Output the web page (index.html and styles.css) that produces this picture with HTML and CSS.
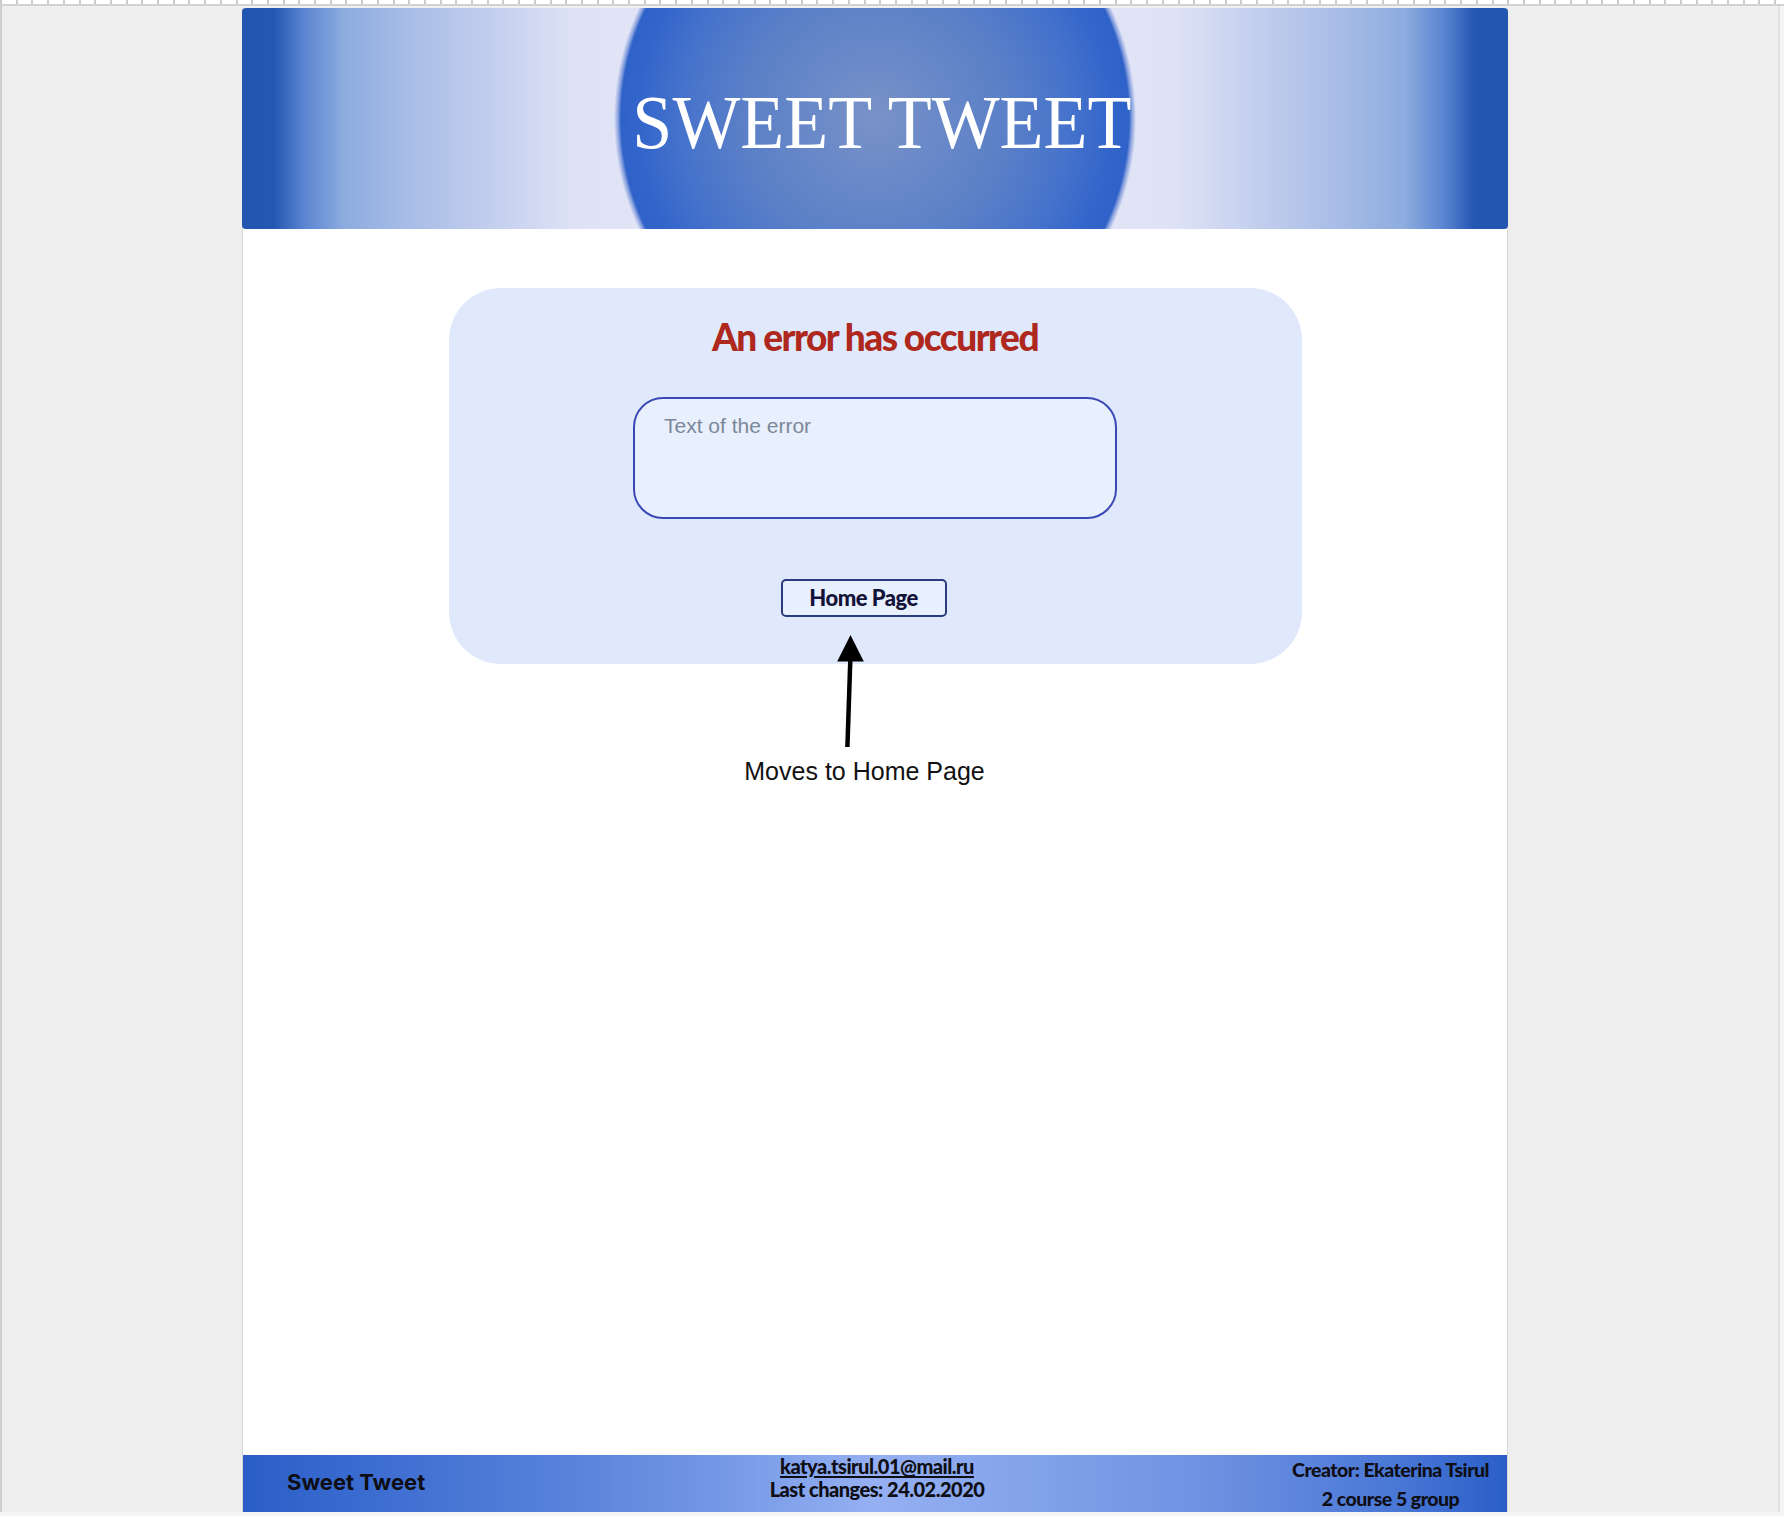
FILE: index.html
```html
<!DOCTYPE html>
<html lang="en">
<head>
<meta charset="utf-8">
<title>Sweet Tweet — Error</title>
<link rel="stylesheet" href="styles.css">
</head>
<body>
<div class="ruler"></div>
<div class="frame">
  <div class="page">
    <header class="masthead">
      <h1 class="brand">SWEET TWEET</h1>
    </header>
    <main class="content">
      <section class="error-card">
        <h2 class="error-title">An error has occurred</h2>
        <div class="error-text">Text of the error</div>
        <div class="actions"><button class="home-btn" type="button">Home Page</button></div>
      </section>
      <div class="annotation">
        <svg class="arrow" width="60" height="112" viewBox="0 0 60 112">
          <polygon points="15.5,0 2.2,26.5 28.8,26.5" fill="#000"/>
          <line x1="15.3" y1="25" x2="12.4" y2="112" stroke="#000" stroke-width="4.5"/>
        </svg>
        <p class="annotation-label">Moves to Home Page</p>
      </div>
    </main>
    <footer class="site-footer">
      <div class="footer-brand">Sweet Tweet</div>
      <div class="footer-contact"><a class="footer-mail" href="#">katya.tsirul.01@mail.ru</a><br>Last changes: 24.02.2020</div>
      <div class="footer-credits">Creator: Ekaterina Tsirul<br>2 course 5 group</div>
    </footer>
  </div>
</div>
</body>
</html>
```
FILE: styles.css
```css
html, body {
  margin: 0;
  padding: 0;
}

body {
  width: 1784px;
  height: 1516px;
  overflow: hidden;
  background: #f5f5f5;
  font-family: "Liberation Sans", Arial, sans-serif;
}

.ruler {
  height: 4px;
  border-bottom: 2px solid #d2d2d2;
  background: repeating-linear-gradient(90deg, #cbcbcb 0 2px, #ffffff 2px 15.7px);
}

.frame {
  width: 1776px;
  height: 1506px;
  border-left: 2px solid #cfcfcf;
  border-right: 2px solid #e2e2e2;
  background: #eeeeee;
  display: flex;
}

.page {
  margin: 2px 0 0 240px;
  width: 1264px;
  height: 1504px;
  background: #ffffff;
  border-left: 1px solid #d6d6d6;
  border-right: 1px solid #d6d6d6;
  display: flex;
  flex-direction: column;
}

/* ---------- header ---------- */
.masthead {
  height: 221px;
  margin: 0 -1px 0 -1px;
  border-radius: 4px;
  box-sizing: border-box;
  padding: 7px 0 0 14px;
  display: flex;
  align-items: center;
  justify-content: center;
  background:
    radial-gradient(circle at 50% 50%,
      #7a93c8 0px,
      #6a89c8 60px,
      #5b80c7 130px,
      #4572cb 195px,
      #3366cb 235px,
      #2f62c8 254px,
      rgba(110, 140, 215, 0.75) 257px,
      rgba(225, 230, 248, 0) 261px),
    linear-gradient(90deg,
      #2356b0 0px,
      #2457b2 32px,
      #5a85d1 62px,
      #8dacdf 102px,
      #a7bce6 165px,
      #c2cdee 245px,
      #dde2f5 330px,
      #ecedf9 632px,
      #dde2f5 934px,
      #c2cdee 1019px,
      #a7bce6 1099px,
      #8dacdf 1162px,
      #5a85d1 1202px,
      #2457b2 1232px,
      #2356b0 1265px);
}

.brand {
  margin: 0;
  font-family: "Liberation Serif", "Times New Roman", serif;
  font-weight: 400;
  font-size: 77px;
  line-height: 77px;
  color: #ffffff;
  white-space: nowrap;
  transform: scaleX(0.935);
}

/* ---------- content ---------- */
.content {
  flex: 1;
  display: flex;
  flex-direction: column;
  align-items: center;
  padding-top: 59px;
}

.error-card {
  width: 853px;
  height: 376px;
  box-sizing: border-box;
  padding: 27px 0 47px;
  border-radius: 52px;
  background: #e0e9fb;
  display: flex;
  flex-direction: column;
  align-items: center;
}

.error-title {
  margin: 0;
  font-family: Lato, "Open Sans", sans-serif;
  font-weight: 900;
  font-size: 37px;
  line-height: 44px;
  letter-spacing: -1.5px;
  color: #ae281d;
}

.error-text {
  margin-top: 38px;
  width: 484px;
  height: 122px;
  box-sizing: border-box;
  padding: 14px 29px;
  border: 2px solid #3a48b6;
  border-radius: 30px;
  background: #e9f0fd;
  font-family: "Liberation Sans", Arial, sans-serif;
  font-size: 21px;
  line-height: 26px;
  color: #7b8899;
}

.actions {
  margin-top: 60px;
  width: 100%;
  box-sizing: border-box;
  padding-right: 23px;
  display: flex;
  justify-content: center;
}

.home-btn {
  width: 166px;
  height: 38px;
  box-sizing: border-box;
  padding: 0 0 2px;
  border: 2px solid #2b3c7e;
  border-radius: 5px;
  background: #e8f0fd;
  font-family: Lato, "Open Sans", sans-serif;
  font-weight: 900;
  font-size: 22px;
  letter-spacing: -0.5px;
  color: #131238;
}

.annotation {
  margin-top: -29px;
  width: 100%;
  box-sizing: border-box;
  padding-right: 21px;
  display: flex;
  flex-direction: column;
  align-items: center;
}

.arrow {
  display: block;
}

.annotation-label {
  margin: 10px 0 0;
  font-family: "Liberation Sans", Arial, sans-serif;
  font-size: 25px;
  line-height: 28px;
  color: #111111;
}

/* ---------- footer ---------- */
.site-footer {
  height: 57px;
  display: grid;
  grid-template-columns: 1fr auto 1fr;
  background: linear-gradient(90deg,
    #2a5ec7 0%,
    #3f6fd2 12%,
    #5d86dc 28%,
    #8aa8ee 46%,
    #95b0f2 50%,
    #7a9ce6 68%,
    #6f92e2 76%,
    #4a78d6 91%,
    #2a5ec7 100%);
  color: #0e0e14;
}

.footer-brand {
  align-self: center;
  padding: 0 0 4px 44px;
  font-family: Inter, "Liberation Sans", sans-serif;
  font-weight: 700;
  font-size: 22px;
}

.footer-contact {
  text-align: center;
  font-family: Lato, "Open Sans", sans-serif;
  font-weight: 900;
  font-size: 20px;
  line-height: 23px;
  letter-spacing: -0.5px;
  padding-left: 4px;
}

.footer-mail {
  color: inherit;
  text-decoration: underline;
  text-underline-offset: 2px;
}

.footer-credits {
  justify-self: end;
  text-align: center;
  padding-right: 18px;
  font-family: Lato, "Open Sans", sans-serif;
  font-weight: 900;
  font-size: 19.5px;
  line-height: 29px;
  letter-spacing: -0.5px;
}

.credits-line {
  display: block;
}
```
